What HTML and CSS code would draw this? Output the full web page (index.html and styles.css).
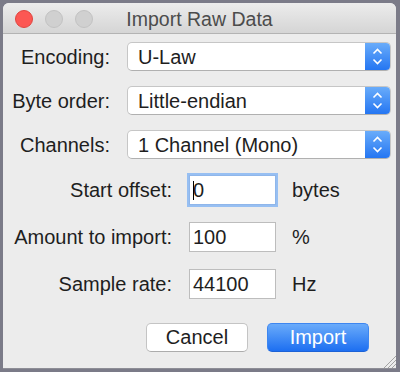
FILE: index.html
```
<!DOCTYPE html>
<html>
<head>
	<meta charset="utf-8">
	<title>Import Raw Data</title>
	<link rel="stylesheet" href="styles.css">
</head>
<body>
<div class="window">
	<div class="titlebar">
		<div class="lights">
			<span class="light close"></span>
			<span class="light"></span>
			<span class="light"></span>
		</div>
		<div class="title">Import Raw Data</div>
		<div></div>
	</div>

	<div class="content">
		<div class="choices">
			<label>Encoding:</label>
			<div class="popup"><span class="value">U-Law</span><span class="stepper"><svg width="11" height="17" viewBox="0 0 11 17"><path d="M1.5 5.5 L5.5 1.5 L9.5 5.5 M1.5 11.5 L5.5 15.5 L9.5 11.5"/></svg></span></div>
			<label>Byte order:</label>
			<div class="popup"><span class="value">Little-endian</span><span class="stepper"><svg width="11" height="17" viewBox="0 0 11 17"><path d="M1.5 5.5 L5.5 1.5 L9.5 5.5 M1.5 11.5 L5.5 15.5 L9.5 11.5"/></svg></span></div>
			<label>Channels:</label>
			<div class="popup"><span class="value">1 Channel (Mono)</span><span class="stepper"><svg width="11" height="17" viewBox="0 0 11 17"><path d="M1.5 5.5 L5.5 1.5 L9.5 5.5 M1.5 11.5 L5.5 15.5 L9.5 11.5"/></svg></span></div>
		</div>

		<div class="fields">
			<label>Start offset:</label>
			<div class="field focus"><span class="caret"></span>0</div>
			<span class="unit">bytes</span>
			<label>Amount to import:</label>
			<div class="field">100</div>
			<span class="unit">%</span>
			<label>Sample rate:</label>
			<div class="field">44100</div>
			<span class="unit">Hz</span>
		</div>

		<div class="buttons">
			<button class="btn">Cancel</button>
			<button class="btn default">Import</button>
		</div>
	</div>

	<svg class="grip" width="14" height="14" viewBox="0 0 14 14"><path d="M2 14 L14 2 M6 14 L14 6 M10 14 L14 10"/></svg>
</div>
</body>
</html>
```

FILE: styles.css
```
body {margin: 0; background: #7b7b88; font-family: "Liberation Sans", Arial, sans-serif; font-size: 20px; color: #1e1e1e;}
.window {position: relative; margin: 3px 4px 0 3px; height: 365px; background: #ececec; border-radius: 6px 6px 0 0; border-bottom: 1px solid #8e8e96; overflow: hidden;}

/* title bar */
.titlebar {display: grid; grid-template-columns: 1fr auto 1fr; align-items: center; height: 30px; background: linear-gradient(#ececec, #d5d5d5); border-bottom: 1px solid #b3b3b3;}
.lights {display: flex; gap: 12px; padding-left: 12px; padding-top: 2px;}
.light {width: 16px; height: 16px; border-radius: 50%; background: #d0d0d0; border: 0.5px solid #c2c2c2;}
.light.close {background: #fc5753; border-color: #e0443e;}
.title {font-size: 19.5px; color: #4c4c4c; padding-top: 2px;}

.content {padding: 8px 5px 0 0;}

/* pop up rows */
.choices {display: grid; grid-template-columns: 107px 1fr; column-gap: 17px; row-gap: 15px; align-items: center;}
label {text-align: right; padding-top: 1px;}
.popup {display: flex; height: 29px; box-sizing: border-box; background: #fff; border: 1px solid #c6c6c6; border-bottom-color: #b0b0b0; border-radius: 5px; overflow: hidden;}
.popup .value {flex: 1; padding-left: 10px; line-height: 28px;}
.stepper {width: 25px; display: flex; align-items: center; justify-content: center; background: linear-gradient(#69acfa, #2576f2);}
.stepper path {fill: none; stroke: #fff; stroke-width: 1.6;}

/* text field rows */
.fields {display: grid; grid-template-columns: 170px 87px auto; column-gap: 16px; row-gap: 17px; align-items: center; margin-top: 16px;}
.fields label {margin-right: 1px;}
.field {position: relative; height: 30px; box-sizing: border-box; background: #fff; border: 1px solid #bdbdbd; padding-left: 3px; line-height: 29px;}
.field.focus {border-color: #8fb6ea; box-shadow: 0 0 0 2px #97bff2;}
.caret {position: absolute; left: 3px; top: 5px; width: 1px; height: 19px; background: #000;}

/* buttons */
.buttons {display: flex; justify-content: flex-end; gap: 19px; margin-top: 24px; padding-right: 22px;}
.btn {width: 102px; height: 29px; font-family: inherit; font-size: 20px; color: #1e1e1e; background: #fff; border: 1px solid #c4c4c4; border-bottom-color: #acacac; border-radius: 5px; padding: 0;}
.btn.default {color: #fff; background: linear-gradient(#6aabfa, #1d6ff1); border-color: #3d86f0 #3d86f0 #1c62d6;}

.grip {position: absolute; right: 0; bottom: 0;}
.grip path {stroke: #a3a3a3; stroke-width: 1;}
```
